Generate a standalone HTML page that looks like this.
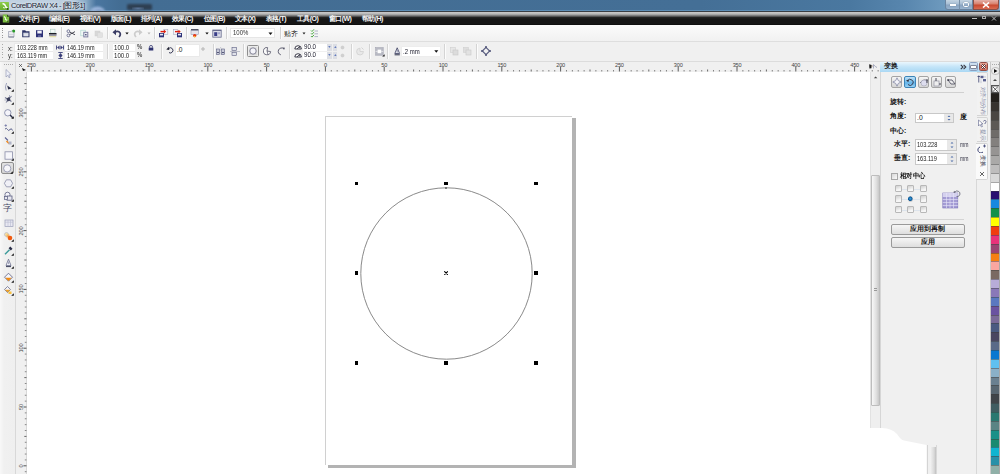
<!DOCTYPE html><html><head><meta charset="utf-8"><style>
*{margin:0;padding:0;box-sizing:border-box}
html,body{width:1000px;height:474px;overflow:hidden;background:#f0f0f0;font-family:"Liberation Sans",sans-serif;position:relative}
div,span,svg{position:absolute}
.t{white-space:nowrap;line-height:1}
</style></head><body>
<div style="left:0px;top:0px;width:1000px;height:11px;background:linear-gradient(90deg,#c2d2e2 0,#bccede 70px,#8aaac6 86px,#4a76a0 96px,#436d93 120px,#446f96 700px,#4a78a0 850px,#5886ae 905px,#6e9abe 945px,#8ab0d0 1000px)"></div>
<div style="left:0px;top:9.6px;width:1000px;height:1px;background:linear-gradient(90deg,#9ab8d4,#5d8db5 120px,#5d8db5 100%)"></div>
<svg style="left:86px;top:2px;filter:blur(0.9px);opacity:0.85" width="24" height="8.6" viewBox="0 0 24 8.6"><ellipse cx="11.5" cy="11" rx="8" ry="6.5" fill="#a8c0e6"/><ellipse cx="13" cy="11" rx="6" ry="2.5" fill="#4a5a9a"/></svg>
<div style="left:126.5px;top:3.6px;width:25px;height:6.8px;background:#2e3f52;border-radius:1.5px;filter:blur(0.9px)"></div>
<div style="left:132px;top:6.5px;width:12px;height:3.5px;background:radial-gradient(ellipse,#5a7498,rgba(42,58,76,0))"></div>
<div style="left:0px;top:1.5px;width:8.5px;height:8.2px;background:linear-gradient(#8ccc48,#6ab030);border-radius:0.5px"></div>
<svg style="left:0.5px;top:2px;" width="8" height="8" viewBox="0 0 8 8"><path d="M1.5 1.5 Q4 2 4.5 4 Q5 5.5 6.5 6" stroke="#fff" stroke-width="1.5" fill="none"/><path d="M2 5.5 Q4 6.5 5 5" stroke="#e8f8d8" stroke-width="1" fill="none"/><rect x="5.8" y="6.2" width="1.4" height="1.4" fill="#1a2a10"/></svg>
<span class="t" style="left:11px;top:2px;font-size:7.5px;color:#1a2430;letter-spacing:-0.45px;text-shadow:0 0 3px #e8f0f8,0 0 2px #e8f0f8">CorelDRAW X4 - [图形1]</span>
<div style="left:945px;top:0px;width:15px;height:10px;background:linear-gradient(#c4d4e2,#a8bed4 45%,#8aa4c0 55%,#98b4d0);border:1px solid #6a84a0;border-top:none;border-radius:0 0 0 3px"></div>
<div style="left:949.5px;top:4px;width:6px;height:2.2px;background:#fff;box-shadow:0 0 0.8px #345"></div>
<div style="left:959px;top:0px;width:14px;height:10px;background:linear-gradient(#c4d4e2,#a8bed4 45%,#8aa4c0 55%,#98b4d0);border:1px solid #6a84a0;border-top:none;border-left:1px solid #7890a8"></div>
<div style="left:963px;top:1.5px;width:6px;height:5px;border:1.5px solid #fff;border-radius:1.5px;box-shadow:0 0 0.8px #345"></div>
<div style="left:973px;top:0px;width:26px;height:10px;background:linear-gradient(#e4b0a8,#d8806c 45%,#c84830 55%,#d86a50);border:1px solid #8a5048;border-top:none;border-radius:0 0 3px 0"></div>
<svg style="left:982px;top:2px;" width="8" height="6" viewBox="0 0 8 6"><path d="M1 0.5 L7 5.5 M7 0.5 L1 5.5" stroke="#fff" stroke-width="1.6"/></svg>
<div style="left:0px;top:11px;width:1000px;height:14px;background:linear-gradient(#3a3e44 0,#3a3e44 0.6px,#c8c8c8 1.2px,#b8b8b8 3px,#6a6a6a 5px,#222 6.5px,#161616 8px,#161616 13px,#0a0a0a 14px)"></div>
<svg style="left:1.5px;top:14px;" width="8" height="9" viewBox="0 0 8 9"><path d="M0.8 0.5 H5 L7.2 2.7 V8.5 H0.8z" fill="#7cc040"/><path d="M5 0.5 V2.7 H7.2z" fill="#2a4a18"/><path d="M2 2.5 Q4 3.5 3.5 5.5 L5.5 6.5" stroke="#f0fae0" stroke-width="1.1" fill="none"/><rect x="5.3" y="6.6" width="1.2" height="1.2" fill="#1a2a10"/></svg>
<span class="t" style="left:19px;top:15px;font-size:7px;color:#f4f4f4;letter-spacing:-0.6px;font-weight:bold">文件(F)</span>
<span class="t" style="left:49px;top:15px;font-size:7px;color:#f4f4f4;letter-spacing:-0.6px;font-weight:bold">编辑(E)</span>
<span class="t" style="left:80px;top:15px;font-size:7px;color:#f4f4f4;letter-spacing:-0.6px;font-weight:bold">视图(V)</span>
<span class="t" style="left:111px;top:15px;font-size:7px;color:#f4f4f4;letter-spacing:-0.6px;font-weight:bold">版面(L)</span>
<span class="t" style="left:141px;top:15px;font-size:7px;color:#f4f4f4;letter-spacing:-0.6px;font-weight:bold">排列(A)</span>
<span class="t" style="left:172px;top:15px;font-size:7px;color:#f4f4f4;letter-spacing:-0.6px;font-weight:bold">效果(C)</span>
<span class="t" style="left:204px;top:15px;font-size:7px;color:#f4f4f4;letter-spacing:-0.6px;font-weight:bold">位图(B)</span>
<span class="t" style="left:235px;top:15px;font-size:7px;color:#f4f4f4;letter-spacing:-0.6px;font-weight:bold">文本(X)</span>
<span class="t" style="left:266px;top:15px;font-size:7px;color:#f4f4f4;letter-spacing:-0.6px;font-weight:bold">表格(T)</span>
<span class="t" style="left:297px;top:15px;font-size:7px;color:#f4f4f4;letter-spacing:-0.6px;font-weight:bold">工具(O)</span>
<span class="t" style="left:329px;top:15px;font-size:7px;color:#f4f4f4;letter-spacing:-0.6px;font-weight:bold">窗口(W)</span>
<span class="t" style="left:362px;top:15px;font-size:7px;color:#f4f4f4;letter-spacing:-0.6px;font-weight:bold">帮助(H)</span>
<div style="left:972px;top:18.3px;width:4.5px;height:1.2px;background:#bbb"></div>
<div style="left:982px;top:15.5px;width:4px;height:3.8px;border:1px solid #aaa;border-top-width:1.5px"></div>
<svg style="left:990.5px;top:15.5px;" width="6" height="5" viewBox="0 0 6 5"><path d="M1 0.5 L5 4.5 M5 0.5 L1 4.5" stroke="#bbb" stroke-width="1"/></svg>
<div style="left:0px;top:25px;width:1000px;height:16px;background:linear-gradient(#fbfbfb,#f1f1f1)"></div>
<div style="left:0px;top:40.5px;width:1000px;height:1px;background:#dedede"></div>
<div style="left:0px;top:41.5px;width:1000px;height:0.6px;background:#fdfdfd"></div>
<div style="left:2px;top:28.0px;width:1px;height:1px;background:#999"></div>
<div style="left:2px;top:30.2px;width:1px;height:1px;background:#999"></div>
<div style="left:2px;top:32.4px;width:1px;height:1px;background:#999"></div>
<div style="left:2px;top:34.6px;width:1px;height:1px;background:#999"></div>
<div style="left:2px;top:36.8px;width:1px;height:1px;background:#999"></div>
<!--icons row1-->
<svg style="left:7px;top:28px;" width="10" height="10" viewBox="0 0 10 10"><path d="M1.5 3.5 L4 3.5 L5.5 2.5 L7 3.5 L7 9 L1.5 9z" fill="#ececf0" stroke="#9a9eb0" stroke-width="0.7"/><path d="M1.5 6.5h5.5" stroke="#c8cad4" stroke-width="0.6"/><path d="M1.5 9h5.5" stroke="#6a7088" stroke-width="0.8"/><circle cx="6.7" cy="3" r="1.5" fill="#2a9a2a"/></svg>
<svg style="left:21px;top:28px;" width="10" height="10" viewBox="0 0 10 10"><path d="M1.2 2.3h3l0.8 1h3.5v5.9h-7.3z" fill="#2a3264"/><path d="M2.3 4.8h5.2v3.6h-5.2z" fill="#dfe2ea"/><path d="M2.3 4.8h5.2" stroke="#8a90b0" stroke-width="0.5"/></svg>
<svg style="left:35px;top:28px;" width="10" height="10" viewBox="0 0 10 10"><rect x="1" y="2.2" width="7" height="7" fill="#2e3278"/><rect x="2.3" y="2.7" width="4.4" height="2.8" fill="#f2f2fa"/><rect x="3" y="7" width="3" height="2" fill="#5a5e98"/></svg>
<svg style="left:48px;top:28px;" width="10" height="10" viewBox="0 0 10 10"><rect x="2.5" y="1.2" width="4.5" height="3.8" fill="#f4faf8" stroke="#b0ccc4" stroke-width="0.6"/><rect x="1" y="5" width="7.5" height="1.6" fill="#1e1e28"/><rect x="1" y="6.6" width="7.5" height="1.6" fill="#9a9aa8"/><rect x="1.5" y="8.2" width="6.5" height="1" fill="#e4dc98"/></svg>
<div style="left:61px;top:27px;width:2px;height:12px;border-left:1px solid #d4d4d4;border-right:1px solid #fcfcfc"></div>
<svg style="left:66px;top:28px;" width="10" height="10" viewBox="0 0 10 10"><circle cx="2.4" cy="3.2" r="1.4" fill="none" stroke="#6a6c90" stroke-width="0.9"/><circle cx="2.4" cy="7.4" r="1.4" fill="none" stroke="#6a6c90" stroke-width="0.9"/><path d="M3.6 4 L9 6.8 M3.6 6.6 L9 3.6" stroke="#3c3c48" stroke-width="0.9"/></svg>
<svg style="left:80px;top:28px;" width="10" height="10" viewBox="0 0 10 10"><rect x="0.8" y="2.2" width="4.6" height="5.6" fill="#f0f8f6" stroke="#a8d4cc" stroke-width="0.6"/><rect x="3.3" y="3.8" width="5" height="5.6" fill="#7a7ea0"/><rect x="4.3" y="4.8" width="3" height="3.6" fill="#f0f0f8"/><rect x="5" y="6" width="1.6" height="1.4" fill="#5a5e80"/></svg>
<svg style="left:94px;top:28px;" width="10" height="10" viewBox="0 0 10 10"><rect x="1" y="3" width="5" height="5" fill="#d8d8d8" stroke="#cfcfcf" stroke-width="0.5"/><rect x="3.5" y="4.8" width="5" height="4.6" fill="#e2e2e2" stroke="#d4d4d4" stroke-width="0.5"/></svg>
<div style="left:107px;top:27px;width:2px;height:12px;border-left:1px solid #d4d4d4;border-right:1px solid #fcfcfc"></div>
<svg style="left:112px;top:28px;" width="10" height="10" viewBox="0 0 10 10"><path d="M2.5 4.2 Q6.5 2.2 8 4.8 Q9 7 7 9" fill="none" stroke="#3a3c64" stroke-width="1.7"/><path d="M0.5 4.3 L4 1.3 L4 7.3z" fill="#3a3c64"/></svg>
<svg style="left:125px;top:32px;" width="4" height="3" viewBox="0 0 4 3"><path d="M0.3 0.5h3.4l-1.7 2z" fill="#111"/></svg>
<svg style="left:133px;top:28px;" width="10" height="10" viewBox="0 0 10 10"><path d="M7.5 4.2 Q3.5 2.2 2 4.8 Q1 7 3 9" fill="none" stroke="#cdcdcd" stroke-width="1.7"/><path d="M9.5 4.3 L6 1.3 L6 7.3z" fill="#cdcdcd"/></svg>
<svg style="left:147px;top:32px;" width="4" height="3" viewBox="0 0 4 3"><path d="M0.5 0.5h3l-1.5 2z" fill="#b8b8b8"/></svg>
<div style="left:154px;top:27px;width:2px;height:12px;border-left:1px solid #d4d4d4;border-right:1px solid #fcfcfc"></div>
<svg style="left:158px;top:28px;" width="11" height="10" viewBox="0 0 11 10"><rect x="5.8" y="1.3" width="4" height="5" fill="#f4f4f8" stroke="#a8acc0" stroke-width="0.6"/><rect x="1" y="5" width="5" height="4.3" fill="#2e3278"/><rect x="2" y="5.8" width="3" height="1.6" fill="#e8e8f4"/><path d="M2.5 3.6 H6.5" stroke="#e02010" stroke-width="1.4"/><path d="M6 1.8 L8.2 3.6 L6 5.4z" fill="#e02010"/></svg>
<svg style="left:172px;top:28px;" width="11" height="10" viewBox="0 0 11 10"><rect x="1.3" y="1.5" width="4.2" height="5" fill="#f4f4f8" stroke="#a8acc0" stroke-width="0.6"/><rect x="5" y="5" width="5" height="4.3" fill="#2e3278"/><rect x="6" y="5.8" width="3" height="1.6" fill="#e8e8f4"/><path d="M3 3.6 H7" stroke="#e02010" stroke-width="1.4"/><path d="M6.5 1.8 L8.7 3.6 L6.5 5.4z" fill="#e02010"/></svg>
<div style="left:186px;top:27px;width:2px;height:12px;border-left:1px solid #d4d4d4;border-right:1px solid #fcfcfc"></div>
<svg style="left:190px;top:28px;" width="10" height="10" viewBox="0 0 10 10"><rect x="1" y="1.2" width="7.5" height="1.4" fill="#2a2c40"/><rect x="1" y="2.6" width="7.5" height="4" fill="#e4e4ec" stroke="#8a8ea8" stroke-width="0.5"/><circle cx="4.7" cy="7.6" r="1.7" fill="#e83010"/><circle cx="4.7" cy="8.6" r="0.9" fill="#f8c030"/></svg>
<svg style="left:204.5px;top:32px;" width="4" height="3" viewBox="0 0 4 3"><path d="M0.3 0.5h3.4l-1.7 2z" fill="#111"/></svg>
<svg style="left:212px;top:28px;" width="10" height="10" viewBox="0 0 10 10"><rect x="0.8" y="2" width="8.4" height="7.2" fill="#dcdde8" stroke="#6a6e90" stroke-width="0.8"/><rect x="0.8" y="2" width="8.4" height="1" fill="#6a6e90"/><rect x="2.2" y="4.2" width="3" height="3.8" fill="#3a3e88"/><rect x="5.5" y="4.2" width="2.5" height="2" fill="#a8acd0"/></svg>
<div style="left:226px;top:27px;width:2px;height:12px;border-left:1px solid #d4d4d4;border-right:1px solid #fcfcfc"></div>
<div style="left:230px;top:28px;width:45px;height:10px;background:#fff;border:1px solid #e6e6e6"></div>
<span class="t" style="left:233px;top:29.8px;font-size:6.8px;color:#333;;transform:scaleX(0.88);transform-origin:0 0">100%</span>
<svg style="left:268px;top:32px;" width="5" height="3" viewBox="0 0 5 3"><path d="M0.5 0.5h4l-2 2.5z" fill="#111"/></svg>
<div style="left:280px;top:27px;width:2px;height:12px;border-left:1px solid #d4d4d4;border-right:1px solid #fcfcfc"></div>
<span class="t" style="left:284px;top:29.5px;font-size:7px;color:#1a1a1a;">贴齐</span>
<svg style="left:302px;top:32px;" width="4" height="3" viewBox="0 0 4 3"><path d="M0.5 0.5h3l-1.5 2z" fill="#222"/></svg>
<svg style="left:310px;top:28px;" width="9" height="10" viewBox="0 0 9 10"><path d="M1 2.5l1 1 2-2.2M1 5.3l1 1 2-2.2M1 8.1l1 1 2-2.2" fill="none" stroke="#3aa030" stroke-width="0.9"/><path d="M4.5 3h3.5M4.5 5.8h3.5M4.5 8.6h3.5" stroke="#9aa0b8" stroke-width="0.8"/></svg>
<div style="left:0px;top:42px;width:1000px;height:20px;background:#f0f0f0"></div>
<div style="left:0px;top:60.6px;width:1000px;height:0.9px;background:#dcdcdc"></div>
<div style="left:2px;top:44.0px;width:1px;height:1px;background:#aaa"></div>
<div style="left:2px;top:46.5px;width:1px;height:1px;background:#aaa"></div>
<div style="left:2px;top:49.0px;width:1px;height:1px;background:#aaa"></div>
<div style="left:2px;top:51.5px;width:1px;height:1px;background:#aaa"></div>
<div style="left:2px;top:54.0px;width:1px;height:1px;background:#aaa"></div>
<div style="left:2px;top:56.5px;width:1px;height:1px;background:#aaa"></div>
<span class="t" style="left:8px;top:44.5px;font-size:7.2px;color:#333;;transform:scaleX(0.85);transform-origin:0 0">x:</span>
<span class="t" style="left:8px;top:52px;font-size:7.2px;color:#333;;transform:scaleX(0.85);transform-origin:0 0">y:</span>
<div style="left:14.2px;top:42.8px;width:39.3px;height:17.2px;background:#e9e9e9;border-radius:1px"></div>
<div style="left:14.7px;top:43.6px;width:38.3px;height:7.6px;background:#fff"></div>
<div style="left:14.7px;top:51.8px;width:38.3px;height:7.4px;background:#fff"></div>
<span class="t" style="left:16.5px;top:44.6px;font-size:6.4px;color:#181818;;transform:scaleX(0.86);transform-origin:0 0">103.228 mm</span>
<span class="t" style="left:16.5px;top:52.7px;font-size:6.4px;color:#181818;;transform:scaleX(0.86);transform-origin:0 0">163.119 mm</span>
<svg style="left:56px;top:44.5px;" width="8" height="5" viewBox="0 0 8 5"><path d="M0.5 0.5v4M7.5 0.5v4" stroke="#3a3e78" stroke-width="0.9"/><path d="M1 2.5l2.6-2v4zM7 2.5l-2.6-2v4z" fill="#3a3e78"/></svg>
<svg style="left:58px;top:51.8px;" width="5" height="7" viewBox="0 0 5 7"><path d="M0.3 0.5h4.4M0.3 6.5h4.4" stroke="#3a3e78" stroke-width="0.9"/><path d="M2.5 1l-2 2.5h4zM2.5 6l-2-2.5h4z" fill="#3a3e78"/></svg>
<div style="left:64.7px;top:42.8px;width:38.6px;height:17.2px;background:#e9e9e9;border-radius:1px"></div>
<div style="left:65.2px;top:43.6px;width:37.6px;height:7.6px;background:#fff"></div>
<div style="left:65.2px;top:51.8px;width:37.6px;height:7.4px;background:#fff"></div>
<span class="t" style="left:66.5px;top:44.6px;font-size:6.4px;color:#181818;;transform:scaleX(0.86);transform-origin:0 0">146.19 mm</span>
<span class="t" style="left:66.5px;top:52.7px;font-size:6.4px;color:#181818;;transform:scaleX(0.86);transform-origin:0 0">146.19 mm</span>
<div style="left:107px;top:44px;width:2px;height:15px;border-left:1px solid #d4d4d4;border-right:1px solid #fcfcfc"></div>
<div style="left:112.5px;top:42.8px;width:22.5px;height:17.2px;background:#e9e9e9;border-radius:1px"></div>
<div style="left:113px;top:43.6px;width:21.5px;height:7.6px;background:#fff"></div>
<div style="left:113px;top:51.8px;width:21.5px;height:7.4px;background:#fff"></div>
<span class="t" style="left:114px;top:44.6px;font-size:6.4px;color:#181818;;transform:scaleX(0.95);transform-origin:0 0">100.0</span>
<span class="t" style="left:114px;top:52.7px;font-size:6.4px;color:#181818;;transform:scaleX(0.95);transform-origin:0 0">100.0</span>
<span class="t" style="left:137px;top:44.2px;font-size:6.6px;color:#505050;font-weight:bold;transform:scaleX(0.9);transform-origin:0 0">%</span>
<span class="t" style="left:137px;top:52.3px;font-size:6.6px;color:#505050;font-weight:bold;transform:scaleX(0.9);transform-origin:0 0">%</span>
<svg style="left:147.5px;top:44.5px;" width="6" height="6" viewBox="0 0 6 6"><path d="M1.5 2.6V1.8a1.5 1.3 0 0 1 3 0v0.8" stroke="#2e3270" fill="none" stroke-width="0.8"/><rect x="0.7" y="2.6" width="4.6" height="2.9" fill="#2e3270"/></svg>
<div style="left:161px;top:44px;width:2px;height:15px;border-left:1px solid #d4d4d4;border-right:1px solid #fcfcfc"></div>
<svg style="left:166px;top:46px;" width="9" height="8" viewBox="0 0 9 8"><path d="M2.8 2.3 A2.6 2.6 0 1 1 3 6.6" fill="none" stroke="#3a3c58" stroke-width="1"/><path d="M0.3 3.4 L2.8 0.8 L3.3 4z" fill="#1e2030"/></svg>
<div style="left:175.5px;top:45px;width:23px;height:11px;background:#fff;box-shadow:0 0 0 0.7px #e6e6e6"></div>
<span class="t" style="left:177px;top:46.5px;font-size:6.6px;color:#222;">.0</span>
<svg style="left:200.5px;top:47px;" width="4" height="4" viewBox="0 0 4 4"><circle cx="2" cy="2" r="1.2" fill="none" stroke="#999" stroke-width="0.7"/></svg>
<div style="left:213px;top:44px;width:2px;height:15px;border-left:1px solid #d4d4d4;border-right:1px solid #fcfcfc"></div>
<svg style="left:216px;top:46.5px;" width="10" height="8" viewBox="0 0 10 8"><path d="M4.6 0v8" stroke="#9a9eb0" stroke-width="0.5" stroke-dasharray="1 0.6"/><rect x="0.5" y="2" width="3" height="5.5" fill="#c8cad8" stroke="#5a5e80" stroke-width="0.6"/><rect x="5.5" y="2" width="3" height="5.5" fill="#c8cad8" stroke="#5a5e80" stroke-width="0.6"/><path d="M1.2 5.5h1.6M6.2 5.5h1.6" stroke="#3a3e60" stroke-width="1"/></svg>
<svg style="left:230px;top:46.5px;" width="10" height="9" viewBox="0 0 10 9"><path d="M0 4.5h10" stroke="#9a9eb0" stroke-width="0.6"/><rect x="2" y="0.5" width="4.5" height="3" fill="#e0e2ea" stroke="#5a5e80" stroke-width="0.6"/><rect x="2" y="5.5" width="4.5" height="3" fill="#e0e2ea" stroke="#5a5e80" stroke-width="0.6"/></svg>
<div style="left:243px;top:44px;width:2px;height:15px;border-left:1px solid #d4d4d4;border-right:1px solid #fcfcfc"></div>
<div style="left:246.8px;top:44.8px;width:12.4px;height:12.4px;background:linear-gradient(#e4e4e4,#d8d8d8);border:1.2px solid #8e8e8e;border-radius:1.5px;box-shadow:inset 0 0 0 0.6px #f4f4f4"></div>
<svg style="left:249px;top:47px;" width="8" height="8" viewBox="0 0 8 8"><circle cx="4" cy="4" r="3.2" fill="#f4f4fa" stroke="#6a6a80" stroke-width="0.8"/></svg>
<svg style="left:262.5px;top:46.5px;" width="9" height="9" viewBox="0 0 9 9"><path d="M4 4 L7.6 4.6 A3.6 3.6 0 1 1 4.6 0.6 z" fill="#fafafa" stroke="#505064" stroke-width="0.8"/><path d="M4 4 L5 7.5" stroke="#505064" stroke-width="0.7"/></svg>
<svg style="left:276.5px;top:46.5px;" width="9" height="9" viewBox="0 0 9 9"><path d="M6.8 1.6 A3.5 3.5 0 1 0 3.8 7.8" fill="none" stroke="#505064" stroke-width="0.9"/><path d="M5.6 0.6 L8 0.8 L7 3z" fill="#505064"/></svg>
<div style="left:289px;top:44px;width:2px;height:15px;border-left:1px solid #d4d4d4;border-right:1px solid #fcfcfc"></div>
<svg style="left:294.2px;top:44.2px;" width="8" height="6" viewBox="0 0 8 6"><path d="M0.8 5 A3.3 3.3 0 0 1 7.4 5z" fill="#fff" stroke="#2a2a3a" stroke-width="0.9"/><path d="M3 5 L5.6 2.4 M5.6 2.4 v1.8" stroke="#2a2a3a" stroke-width="0.8"/></svg>
<div style="left:302.5px;top:43.6px;width:24.5px;height:7.6px;background:#fff"></div>
<span class="t" style="left:304px;top:44.300000000000004px;font-size:6.9px;color:#1a1a2a;;transform:scaleX(0.9);transform-origin:0 0">90.0</span>
<div style="left:327px;top:43.6px;width:4.6px;height:7.2px;background:#dcdee4"></div>
<div style="left:332.6px;top:43.6px;width:4.6px;height:7.2px;background:#dcdee4"></div>
<svg style="left:327px;top:44.2px;" width="5" height="6" viewBox="0 0 5 6"><path d="M1.2 2.2h2.4l-1.2 1.6z" fill="#3a5ab0"/></svg>
<svg style="left:332.6px;top:44.2px;" width="5" height="6" viewBox="0 0 5 6"><path d="M1.2 3.8h2.4l-1.2-1.6z" fill="#3a5ab0"/></svg>
<svg style="left:339.5px;top:44.5px;" width="5" height="5" viewBox="0 0 5 5"><circle cx="2.5" cy="2.5" r="1.5" fill="#d0d0d0" stroke="#c0c0c0" stroke-width="0.5"/></svg>
<svg style="left:294.2px;top:52.2px;" width="8" height="6" viewBox="0 0 8 6"><path d="M0.8 5 A3.3 3.3 0 0 1 7.4 5z" fill="#fff" stroke="#2a2a3a" stroke-width="0.9"/><path d="M3 5 L5.6 2.4 M5.6 2.4 v1.8" stroke="#2a2a3a" stroke-width="0.8"/></svg>
<div style="left:302.5px;top:51.6px;width:24.5px;height:7.6px;background:#fff"></div>
<span class="t" style="left:304px;top:52.300000000000004px;font-size:6.9px;color:#1a1a2a;;transform:scaleX(0.9);transform-origin:0 0">90.0</span>
<div style="left:327px;top:51.6px;width:4.6px;height:7.2px;background:#dcdee4"></div>
<div style="left:332.6px;top:51.6px;width:4.6px;height:7.2px;background:#dcdee4"></div>
<svg style="left:327px;top:52.2px;" width="5" height="6" viewBox="0 0 5 6"><path d="M1.2 2.2h2.4l-1.2 1.6z" fill="#3a5ab0"/></svg>
<svg style="left:332.6px;top:52.2px;" width="5" height="6" viewBox="0 0 5 6"><path d="M1.2 3.8h2.4l-1.2-1.6z" fill="#3a5ab0"/></svg>
<svg style="left:339.5px;top:52.5px;" width="5" height="5" viewBox="0 0 5 5"><circle cx="2.5" cy="2.5" r="1.5" fill="#d0d0d0" stroke="#c0c0c0" stroke-width="0.5"/></svg>
<div style="left:351px;top:44px;width:2px;height:15px;border-left:1px solid #d4d4d4;border-right:1px solid #fcfcfc"></div>
<svg style="left:356px;top:47px;" width="9" height="9" viewBox="0 0 9 9"><path d="M4 4.5 L4 1.2 A3.4 3.4 0 1 0 7.4 4.5z" fill="#e8e8e8" stroke="#cdcdcd" stroke-width="0.7"/><path d="M5.5 0.5 L7.5 2.5" stroke="#c4c4c4" stroke-width="0.7"/></svg>
<div style="left:369px;top:44px;width:2px;height:15px;border-left:1px solid #d4d4d4;border-right:1px solid #fcfcfc"></div>
<svg style="left:374.5px;top:46.8px;" width="10" height="10" viewBox="0 0 10 10"><rect x="0.6" y="0.6" width="7.6" height="7.6" fill="#b8bac4" stroke="#9a9caa" stroke-width="0.5"/><rect x="2.6" y="2.6" width="3.6" height="3.6" fill="#fff"/><path d="M0.6 4.4h2M6.2 4.4h2" stroke="#fff" stroke-width="0.6"/><path d="M7.2 9.6 L9.6 9.6 L9.6 7.2z" fill="#111"/></svg>
<div style="left:387px;top:44px;width:2px;height:15px;border-left:1px solid #d4d4d4;border-right:1px solid #fcfcfc"></div>
<svg style="left:393.5px;top:46.5px;" width="7" height="9" viewBox="0 0 7 9"><path d="M3.2 0.8 L5.6 6.5 H0.8 z" fill="#eceef6" stroke="#3a3e60" stroke-width="0.8"/><path d="M3.2 3v2.5" stroke="#3a3e60" stroke-width="0.5"/><path d="M0.6 7.8h5.2" stroke="#2a2e48" stroke-width="1"/></svg>
<div style="left:401.5px;top:46.8px;width:38px;height:9.2px;background:#fff;box-shadow:0 0 0 0.6px #ececec"></div>
<span class="t" style="left:403px;top:48.5px;font-size:6.8px;color:#1a1a2a;;transform:scaleX(0.88);transform-origin:0 0">.2 mm</span>
<svg style="left:433.5px;top:50px;" width="5" height="3" viewBox="0 0 5 3"><path d="M0.3 0.3h4l-2 2.5z" fill="#111"/></svg>
<div style="left:444px;top:44px;width:2px;height:15px;border-left:1px solid #d4d4d4;border-right:1px solid #fcfcfc"></div>
<svg style="left:449.5px;top:46.5px;" width="9" height="9" viewBox="0 0 9 9"><rect x="0.5" y="0.5" width="4.8" height="4.8" fill="#e6e6e6" stroke="#cfcfcf" stroke-width="0.6"/><rect x="3" y="3" width="5" height="5" fill="#dcdcdc" stroke="#c8c8c8" stroke-width="0.6"/></svg>
<svg style="left:462.5px;top:46.5px;" width="9" height="9" viewBox="0 0 9 9"><rect x="0.5" y="0.5" width="4.8" height="4.8" fill="#dedede" stroke="#cfcfcf" stroke-width="0.6"/><rect x="3" y="3" width="5" height="5" fill="#e2e2e2" stroke="#c8c8c8" stroke-width="0.6"/></svg>
<div style="left:476px;top:44px;width:2px;height:15px;border-left:1px solid #d4d4d4;border-right:1px solid #fcfcfc"></div>
<svg style="left:480.5px;top:46px;" width="10" height="10" viewBox="0 0 10 10"><path d="M5 1.3 L8.7 5 L5 8.7 L1.3 5z" fill="none" stroke="#5a5e80" stroke-width="1.1"/><rect x="4" y="0.2" width="2" height="2" fill="#5a5e80"/><rect x="4" y="7.8" width="2" height="2" fill="#5a5e80"/><rect x="0.2" y="4" width="2" height="2" fill="#5a5e80"/><rect x="7.8" y="4" width="2" height="2" fill="#5a5e80"/></svg>
<div style="left:0px;top:62px;width:16px;height:412px;background:linear-gradient(90deg,#f8f8f8,#f0f0f0 4px,#efefef);border-right:1px solid #d8d8d8"></div>
<div style="left:3.5px;top:64px;width:1px;height:1px;background:#aaa"></div>
<div style="left:5.5px;top:64px;width:1px;height:1px;background:#aaa"></div>
<div style="left:7.5px;top:64px;width:1px;height:1px;background:#aaa"></div>
<div style="left:9.5px;top:64px;width:1px;height:1px;background:#aaa"></div>
<div style="left:11.5px;top:64px;width:1px;height:1px;background:#aaa"></div>
<svg style="left:2.5px;top:67.5px;" width="11" height="11" viewBox="0 0 11 11"><path d="M3 1.5 L3 9 L4.8 7.3 L6 9.8 L7 9.3 L5.9 6.8 L8.2 6.6 z" fill="#eef0f8" stroke="#8a90b0" stroke-width="0.6"/></svg>
<svg style="left:2.5px;top:80.5px;" width="11" height="11" viewBox="0 0 11 11"><path d="M3.2 9.5 Q1.5 6 3.6 2" fill="none" stroke="#8a90b0" stroke-width="0.8"/><path d="M4.2 4.5 L8.6 7.5 L5.2 8.6z" fill="#2a2e48"/><path d="M8.2 10.8h2.6v-2.6z" fill="#111"/></svg>
<svg style="left:2.5px;top:94.0px;" width="11" height="11" viewBox="0 0 11 11"><path d="M2 3.5 L8.5 7.5 M8.5 2 L3 8.5" stroke="#7a7e98" stroke-width="1.1"/><path d="M3.5 4.5 L6.5 2.8 L7.5 6.5 L4.5 7.5z" fill="#3a3e5a"/><path d="M1.5 6h2.5M6.5 1v2" stroke="#9a9eb8" stroke-width="0.7"/><path d="M8.2 10.8h2.6v-2.6z" fill="#111"/></svg>
<svg style="left:2.5px;top:108.0px;" width="11" height="11" viewBox="0 0 11 11"><circle cx="4.8" cy="4.8" r="3.2" fill="#f4f4fa" stroke="#7a80a0" stroke-width="0.8"/><path d="M7.1 7.1l2.6 2.6" stroke="#2a2e48" stroke-width="1.4"/><path d="M8.2 10.8h2.6v-2.6z" fill="#111"/></svg>
<svg style="left:2.5px;top:122.5px;" width="11" height="11" viewBox="0 0 11 11"><path d="M1.5 2.5h2.5M2.75 1.2v2.6" stroke="#6a70a0" stroke-width="0.7"/><path d="M2 6 Q3.5 4.5 4.5 6.5 T7 6.5 T9.5 7.5" fill="none" stroke="#4a5080" stroke-width="0.9"/><path d="M8.2 10.8h2.6v-2.6z" fill="#111"/></svg>
<svg style="left:2.5px;top:136.0px;" width="11" height="11" viewBox="0 0 11 11"><path d="M2 1.5 L5 4.5" stroke="#5a6090" stroke-width="1.1"/><path d="M3.5 5 L6 7.5" stroke="#f08a20" stroke-width="1.6"/><rect x="5.5" y="5.5" width="3" height="3" fill="#b0b4c8"/><path d="M8.2 10.8h2.6v-2.6z" fill="#111"/></svg>
<svg style="left:2.5px;top:150.2px;" width="11" height="11" viewBox="0 0 11 11"><rect x="2" y="1.8" width="7.4" height="7.4" fill="#f6f6fa" stroke="#8a8ea8" stroke-width="0.8"/><path d="M8.2 10.8h2.6v-2.6z" fill="#111"/></svg>
<div style="left:1.2px;top:162.3px;width:12.5px;height:12px;background:linear-gradient(#e2e2e2,#d4d4d4);border:1.2px solid #8e8e8e;border-radius:2px"></div>
<svg style="left:2px;top:162.8px;" width="11" height="11" viewBox="0 0 11 11"><circle cx="5.2" cy="5.4" r="3.6" fill="#f6f6fa" stroke="#8a8ea8" stroke-width="0.8"/><path d="M8.2 10.8h2.6v-2.6z" fill="#111"/></svg>
<svg style="left:2.5px;top:177.5px;" width="11" height="11" viewBox="0 0 11 11"><path d="M3.4 1.8 H7.6 L9.6 5.3 L7.6 8.8 H3.4 L1.4 5.3z" fill="#f0f0f6" stroke="#8a8ea8" stroke-width="0.8"/><path d="M8.2 10.8h2.6v-2.6z" fill="#111"/></svg>
<svg style="left:2.5px;top:190.5px;" width="11" height="11" viewBox="0 0 11 11"><circle cx="4.5" cy="3.8" r="2.6" fill="#f4f4fa" stroke="#5a5e80" stroke-width="0.8"/><rect x="4" y="5" width="5" height="4.2" fill="#e8e8f0" stroke="#5a5e80" stroke-width="0.8"/><rect x="1.5" y="5.5" width="3" height="3" fill="#e8e8f0" stroke="#5a5e80" stroke-width="0.7"/><path d="M8.2 10.8h2.6v-2.6z" fill="#111"/></svg>
<span class="t" style="left:3.2px;top:204.3px;font-size:8.6px;color:#4a4e68;">字</span>
<svg style="left:2.5px;top:217.5px;" width="11" height="11" viewBox="0 0 11 11"><rect x="2" y="2" width="8" height="6.5" fill="#e8e8f2" stroke="#9a9eb8" stroke-width="0.7"/><path d="M2 4.2h8M5 2v6.5M7.5 2v6.5" stroke="#b8bcd0" stroke-width="0.6"/></svg>
<svg style="left:2.5px;top:231.1px;" width="11" height="11" viewBox="0 0 11 11"><circle cx="3.5" cy="3.5" r="2" fill="#f8e0a0" stroke="#a0a4c0" stroke-width="0.5"/><rect x="3.5" y="3.5" width="3" height="3" fill="#f4b060"/><circle cx="7" cy="7" r="2.3" fill="#f05a10"/><path d="M8.2 10.8h2.6v-2.6z" fill="#111"/></svg>
<svg style="left:2.5px;top:244.5px;" width="11" height="11" viewBox="0 0 11 11"><path d="M2 9.2 L6.5 4.7" stroke="#3a9a9a" stroke-width="1.5"/><path d="M5.6 3.2 L7.8 5.4 L9.5 3.7 L7.3 1.5z" fill="#2a2e48"/><path d="M8.2 10.8h2.6v-2.6z" fill="#111"/></svg>
<svg style="left:2.5px;top:258.1px;" width="11" height="11" viewBox="0 0 11 11"><path d="M5.5 1.2 L8 7.5 H3 z" fill="#eef0f8" stroke="#5a5e80" stroke-width="0.7"/><path d="M5.5 3.6v2.5" stroke="#5a5e80" stroke-width="0.5"/><path d="M3 8.6h5" stroke="#3a3e58" stroke-width="1"/><path d="M8.2 10.8h2.6v-2.6z" fill="#111"/></svg>
<svg style="left:2.5px;top:271.5px;" width="11" height="11" viewBox="0 0 11 11"><path d="M5.5 1.2 L9.5 5.2 L5.5 9.2 L1.5 5.2z" fill="#f4f4fa" stroke="#5a5e80" stroke-width="0.8"/><path d="M2.3 5.8 L8.7 5.8 L5.5 9z" fill="#f08a10"/><path d="M8.2 10.8h2.6v-2.6z" fill="#111"/></svg>
<svg style="left:2.5px;top:285.0px;" width="11" height="11" viewBox="0 0 11 11"><path d="M4.5 1.5 L7.5 4.5 L4.5 7.5 L1.5 4.5z" fill="#f4f4fa" stroke="#5a5e80" stroke-width="0.7"/><path d="M2 4.8 L7 4.8 L4.5 7.2z" fill="#f0a020"/><rect x="5.5" y="6.5" width="3" height="2.5" fill="#f8c040"/><path d="M8.2 10.8h2.6v-2.6z" fill="#111"/></svg>
<div style="left:16px;top:62px;width:864px;height:10.5px;background:#f0f0f0;border-bottom:1px solid #e2e2e2"></div>
<div style="left:16px;top:72px;width:11px;height:402px;background:#f0f0f0;border-right:1px solid #d8d8d8"></div>
<svg style="left:18px;top:63px;" width="9" height="8" viewBox="0 0 9 8"><path d="M1 1 L4 4 M1 4 L4 1" stroke="#444" stroke-width="0.7"/><path d="M4 5 L8 7 L5 8z" fill="#111"/></svg>
<span class="t" style="left:25.40px;top:62.6px;width:12px;text-align:center;font-size:5.6px;color:#444;letter-spacing:-0.2px">250</span>
<span class="t" style="left:84.20px;top:62.6px;width:12px;text-align:center;font-size:5.6px;color:#444;letter-spacing:-0.2px">200</span>
<span class="t" style="left:143.00px;top:62.6px;width:12px;text-align:center;font-size:5.6px;color:#444;letter-spacing:-0.2px">150</span>
<span class="t" style="left:201.80px;top:62.6px;width:12px;text-align:center;font-size:5.6px;color:#444;letter-spacing:-0.2px">100</span>
<span class="t" style="left:260.60px;top:62.6px;width:12px;text-align:center;font-size:5.6px;color:#444;letter-spacing:-0.2px">50</span>
<span class="t" style="left:319.40px;top:62.6px;width:12px;text-align:center;font-size:5.6px;color:#444;letter-spacing:-0.2px">0</span>
<span class="t" style="left:378.20px;top:62.6px;width:12px;text-align:center;font-size:5.6px;color:#444;letter-spacing:-0.2px">50</span>
<span class="t" style="left:437.00px;top:62.6px;width:12px;text-align:center;font-size:5.6px;color:#444;letter-spacing:-0.2px">100</span>
<span class="t" style="left:495.80px;top:62.6px;width:12px;text-align:center;font-size:5.6px;color:#444;letter-spacing:-0.2px">150</span>
<span class="t" style="left:554.60px;top:62.6px;width:12px;text-align:center;font-size:5.6px;color:#444;letter-spacing:-0.2px">200</span>
<span class="t" style="left:613.40px;top:62.6px;width:12px;text-align:center;font-size:5.6px;color:#444;letter-spacing:-0.2px">250</span>
<span class="t" style="left:672.20px;top:62.6px;width:12px;text-align:center;font-size:5.6px;color:#444;letter-spacing:-0.2px">300</span>
<span class="t" style="left:731.00px;top:62.6px;width:12px;text-align:center;font-size:5.6px;color:#444;letter-spacing:-0.2px">350</span>
<span class="t" style="left:789.80px;top:62.6px;width:12px;text-align:center;font-size:5.6px;color:#444;letter-spacing:-0.2px">400</span>
<span class="t" style="left:848.60px;top:62.6px;width:12px;text-align:center;font-size:5.6px;color:#444;letter-spacing:-0.2px">450</span>
<svg style="left:0;top:62px" width="880" height="10"><rect x="30.90" y="5" width="1" height="4.5" fill="#5a5a5a"/><rect x="36.78" y="8" width="1" height="1.5" fill="#808080"/><rect x="42.66" y="8" width="1" height="1.5" fill="#808080"/><rect x="48.54" y="8" width="1" height="1.5" fill="#808080"/><rect x="54.42" y="8" width="1" height="1.5" fill="#808080"/><rect x="60.30" y="7.5" width="1" height="2" fill="#666"/><rect x="66.18" y="8" width="1" height="1.5" fill="#808080"/><rect x="72.06" y="8" width="1" height="1.5" fill="#808080"/><rect x="77.94" y="8" width="1" height="1.5" fill="#808080"/><rect x="83.82" y="8" width="1" height="1.5" fill="#808080"/><rect x="89.70" y="5" width="1" height="4.5" fill="#5a5a5a"/><rect x="95.58" y="8" width="1" height="1.5" fill="#808080"/><rect x="101.46" y="8" width="1" height="1.5" fill="#808080"/><rect x="107.34" y="8" width="1" height="1.5" fill="#808080"/><rect x="113.22" y="8" width="1" height="1.5" fill="#808080"/><rect x="119.10" y="7.5" width="1" height="2" fill="#666"/><rect x="124.98" y="8" width="1" height="1.5" fill="#808080"/><rect x="130.86" y="8" width="1" height="1.5" fill="#808080"/><rect x="136.74" y="8" width="1" height="1.5" fill="#808080"/><rect x="142.62" y="8" width="1" height="1.5" fill="#808080"/><rect x="148.50" y="5" width="1" height="4.5" fill="#5a5a5a"/><rect x="154.38" y="8" width="1" height="1.5" fill="#808080"/><rect x="160.26" y="8" width="1" height="1.5" fill="#808080"/><rect x="166.14" y="8" width="1" height="1.5" fill="#808080"/><rect x="172.02" y="8" width="1" height="1.5" fill="#808080"/><rect x="177.90" y="7.5" width="1" height="2" fill="#666"/><rect x="183.78" y="8" width="1" height="1.5" fill="#808080"/><rect x="189.66" y="8" width="1" height="1.5" fill="#808080"/><rect x="195.54" y="8" width="1" height="1.5" fill="#808080"/><rect x="201.42" y="8" width="1" height="1.5" fill="#808080"/><rect x="207.30" y="5" width="1" height="4.5" fill="#5a5a5a"/><rect x="213.18" y="8" width="1" height="1.5" fill="#808080"/><rect x="219.06" y="8" width="1" height="1.5" fill="#808080"/><rect x="224.94" y="8" width="1" height="1.5" fill="#808080"/><rect x="230.82" y="8" width="1" height="1.5" fill="#808080"/><rect x="236.70" y="7.5" width="1" height="2" fill="#666"/><rect x="242.58" y="8" width="1" height="1.5" fill="#808080"/><rect x="248.46" y="8" width="1" height="1.5" fill="#808080"/><rect x="254.34" y="8" width="1" height="1.5" fill="#808080"/><rect x="260.22" y="8" width="1" height="1.5" fill="#808080"/><rect x="266.10" y="5" width="1" height="4.5" fill="#5a5a5a"/><rect x="271.98" y="8" width="1" height="1.5" fill="#808080"/><rect x="277.86" y="8" width="1" height="1.5" fill="#808080"/><rect x="283.74" y="8" width="1" height="1.5" fill="#808080"/><rect x="289.62" y="8" width="1" height="1.5" fill="#808080"/><rect x="295.50" y="7.5" width="1" height="2" fill="#666"/><rect x="301.38" y="8" width="1" height="1.5" fill="#808080"/><rect x="307.26" y="8" width="1" height="1.5" fill="#808080"/><rect x="313.14" y="8" width="1" height="1.5" fill="#808080"/><rect x="319.02" y="8" width="1" height="1.5" fill="#808080"/><rect x="324.90" y="5" width="1" height="4.5" fill="#5a5a5a"/><rect x="330.78" y="8" width="1" height="1.5" fill="#808080"/><rect x="336.66" y="8" width="1" height="1.5" fill="#808080"/><rect x="342.54" y="8" width="1" height="1.5" fill="#808080"/><rect x="348.42" y="8" width="1" height="1.5" fill="#808080"/><rect x="354.30" y="7.5" width="1" height="2" fill="#666"/><rect x="360.18" y="8" width="1" height="1.5" fill="#808080"/><rect x="366.06" y="8" width="1" height="1.5" fill="#808080"/><rect x="371.94" y="8" width="1" height="1.5" fill="#808080"/><rect x="377.82" y="8" width="1" height="1.5" fill="#808080"/><rect x="383.70" y="5" width="1" height="4.5" fill="#5a5a5a"/><rect x="389.58" y="8" width="1" height="1.5" fill="#808080"/><rect x="395.46" y="8" width="1" height="1.5" fill="#808080"/><rect x="401.34" y="8" width="1" height="1.5" fill="#808080"/><rect x="407.22" y="8" width="1" height="1.5" fill="#808080"/><rect x="413.10" y="7.5" width="1" height="2" fill="#666"/><rect x="418.98" y="8" width="1" height="1.5" fill="#808080"/><rect x="424.86" y="8" width="1" height="1.5" fill="#808080"/><rect x="430.74" y="8" width="1" height="1.5" fill="#808080"/><rect x="436.62" y="8" width="1" height="1.5" fill="#808080"/><rect x="442.50" y="5" width="1" height="4.5" fill="#5a5a5a"/><rect x="448.38" y="8" width="1" height="1.5" fill="#808080"/><rect x="454.26" y="8" width="1" height="1.5" fill="#808080"/><rect x="460.14" y="8" width="1" height="1.5" fill="#808080"/><rect x="466.02" y="8" width="1" height="1.5" fill="#808080"/><rect x="471.90" y="7.5" width="1" height="2" fill="#666"/><rect x="477.78" y="8" width="1" height="1.5" fill="#808080"/><rect x="483.66" y="8" width="1" height="1.5" fill="#808080"/><rect x="489.54" y="8" width="1" height="1.5" fill="#808080"/><rect x="495.42" y="8" width="1" height="1.5" fill="#808080"/><rect x="501.30" y="5" width="1" height="4.5" fill="#5a5a5a"/><rect x="507.18" y="8" width="1" height="1.5" fill="#808080"/><rect x="513.06" y="8" width="1" height="1.5" fill="#808080"/><rect x="518.94" y="8" width="1" height="1.5" fill="#808080"/><rect x="524.82" y="8" width="1" height="1.5" fill="#808080"/><rect x="530.70" y="7.5" width="1" height="2" fill="#666"/><rect x="536.58" y="8" width="1" height="1.5" fill="#808080"/><rect x="542.46" y="8" width="1" height="1.5" fill="#808080"/><rect x="548.34" y="8" width="1" height="1.5" fill="#808080"/><rect x="554.22" y="8" width="1" height="1.5" fill="#808080"/><rect x="560.10" y="5" width="1" height="4.5" fill="#5a5a5a"/><rect x="565.98" y="8" width="1" height="1.5" fill="#808080"/><rect x="571.86" y="8" width="1" height="1.5" fill="#808080"/><rect x="577.74" y="8" width="1" height="1.5" fill="#808080"/><rect x="583.62" y="8" width="1" height="1.5" fill="#808080"/><rect x="589.50" y="7.5" width="1" height="2" fill="#666"/><rect x="595.38" y="8" width="1" height="1.5" fill="#808080"/><rect x="601.26" y="8" width="1" height="1.5" fill="#808080"/><rect x="607.14" y="8" width="1" height="1.5" fill="#808080"/><rect x="613.02" y="8" width="1" height="1.5" fill="#808080"/><rect x="618.90" y="5" width="1" height="4.5" fill="#5a5a5a"/><rect x="624.78" y="8" width="1" height="1.5" fill="#808080"/><rect x="630.66" y="8" width="1" height="1.5" fill="#808080"/><rect x="636.54" y="8" width="1" height="1.5" fill="#808080"/><rect x="642.42" y="8" width="1" height="1.5" fill="#808080"/><rect x="648.30" y="7.5" width="1" height="2" fill="#666"/><rect x="654.18" y="8" width="1" height="1.5" fill="#808080"/><rect x="660.06" y="8" width="1" height="1.5" fill="#808080"/><rect x="665.94" y="8" width="1" height="1.5" fill="#808080"/><rect x="671.82" y="8" width="1" height="1.5" fill="#808080"/><rect x="677.70" y="5" width="1" height="4.5" fill="#5a5a5a"/><rect x="683.58" y="8" width="1" height="1.5" fill="#808080"/><rect x="689.46" y="8" width="1" height="1.5" fill="#808080"/><rect x="695.34" y="8" width="1" height="1.5" fill="#808080"/><rect x="701.22" y="8" width="1" height="1.5" fill="#808080"/><rect x="707.10" y="7.5" width="1" height="2" fill="#666"/><rect x="712.98" y="8" width="1" height="1.5" fill="#808080"/><rect x="718.86" y="8" width="1" height="1.5" fill="#808080"/><rect x="724.74" y="8" width="1" height="1.5" fill="#808080"/><rect x="730.62" y="8" width="1" height="1.5" fill="#808080"/><rect x="736.50" y="5" width="1" height="4.5" fill="#5a5a5a"/><rect x="742.38" y="8" width="1" height="1.5" fill="#808080"/><rect x="748.26" y="8" width="1" height="1.5" fill="#808080"/><rect x="754.14" y="8" width="1" height="1.5" fill="#808080"/><rect x="760.02" y="8" width="1" height="1.5" fill="#808080"/><rect x="765.90" y="7.5" width="1" height="2" fill="#666"/><rect x="771.78" y="8" width="1" height="1.5" fill="#808080"/><rect x="777.66" y="8" width="1" height="1.5" fill="#808080"/><rect x="783.54" y="8" width="1" height="1.5" fill="#808080"/><rect x="789.42" y="8" width="1" height="1.5" fill="#808080"/><rect x="795.30" y="5" width="1" height="4.5" fill="#5a5a5a"/><rect x="801.18" y="8" width="1" height="1.5" fill="#808080"/><rect x="807.06" y="8" width="1" height="1.5" fill="#808080"/><rect x="812.94" y="8" width="1" height="1.5" fill="#808080"/><rect x="818.82" y="8" width="1" height="1.5" fill="#808080"/><rect x="824.70" y="7.5" width="1" height="2" fill="#666"/><rect x="830.58" y="8" width="1" height="1.5" fill="#808080"/><rect x="836.46" y="8" width="1" height="1.5" fill="#808080"/><rect x="842.34" y="8" width="1" height="1.5" fill="#808080"/><rect x="848.22" y="8" width="1" height="1.5" fill="#808080"/><rect x="854.10" y="5" width="1" height="4.5" fill="#5a5a5a"/><rect x="859.98" y="8" width="1" height="1.5" fill="#808080"/><rect x="865.86" y="8" width="1" height="1.5" fill="#808080"/><rect x="871.74" y="8" width="1" height="1.5" fill="#808080"/><rect x="877.62" y="8" width="1" height="1.5" fill="#808080"/></svg>
<span class="t" style="left:15.5px;top:462.80px;width:12px;text-align:center;font-size:5.6px;color:#444;letter-spacing:-0.2px;transform:rotate(-90deg);transform-origin:6px 3px">0</span>
<span class="t" style="left:15.5px;top:404.00px;width:12px;text-align:center;font-size:5.6px;color:#444;letter-spacing:-0.2px;transform:rotate(-90deg);transform-origin:6px 3px">50</span>
<span class="t" style="left:15.5px;top:345.20px;width:12px;text-align:center;font-size:5.6px;color:#444;letter-spacing:-0.2px;transform:rotate(-90deg);transform-origin:6px 3px">100</span>
<span class="t" style="left:15.5px;top:286.40px;width:12px;text-align:center;font-size:5.6px;color:#444;letter-spacing:-0.2px;transform:rotate(-90deg);transform-origin:6px 3px">150</span>
<span class="t" style="left:15.5px;top:227.60px;width:12px;text-align:center;font-size:5.6px;color:#444;letter-spacing:-0.2px;transform:rotate(-90deg);transform-origin:6px 3px">200</span>
<span class="t" style="left:15.5px;top:168.80px;width:12px;text-align:center;font-size:5.6px;color:#444;letter-spacing:-0.2px;transform:rotate(-90deg);transform-origin:6px 3px">250</span>
<span class="t" style="left:15.5px;top:110.00px;width:12px;text-align:center;font-size:5.6px;color:#444;letter-spacing:-0.2px;transform:rotate(-90deg);transform-origin:6px 3px">300</span>
<svg style="left:17px;top:0" width="10" height="474"><rect x="7.8" y="471.18" width="1.7" height="1" fill="#888"/><rect x="6.5" y="465.30" width="3" height="1" fill="#555"/><rect x="7.8" y="459.42" width="1.7" height="1" fill="#888"/><rect x="7.8" y="453.54" width="1.7" height="1" fill="#888"/><rect x="7.8" y="447.66" width="1.7" height="1" fill="#888"/><rect x="7.8" y="441.78" width="1.7" height="1" fill="#888"/><rect x="7.3" y="435.90" width="2.2" height="1" fill="#666"/><rect x="7.8" y="430.02" width="1.7" height="1" fill="#888"/><rect x="7.8" y="424.14" width="1.7" height="1" fill="#888"/><rect x="7.8" y="418.26" width="1.7" height="1" fill="#888"/><rect x="7.8" y="412.38" width="1.7" height="1" fill="#888"/><rect x="6.5" y="406.50" width="3" height="1" fill="#555"/><rect x="7.8" y="400.62" width="1.7" height="1" fill="#888"/><rect x="7.8" y="394.74" width="1.7" height="1" fill="#888"/><rect x="7.8" y="388.86" width="1.7" height="1" fill="#888"/><rect x="7.8" y="382.98" width="1.7" height="1" fill="#888"/><rect x="7.3" y="377.10" width="2.2" height="1" fill="#666"/><rect x="7.8" y="371.22" width="1.7" height="1" fill="#888"/><rect x="7.8" y="365.34" width="1.7" height="1" fill="#888"/><rect x="7.8" y="359.46" width="1.7" height="1" fill="#888"/><rect x="7.8" y="353.58" width="1.7" height="1" fill="#888"/><rect x="6.5" y="347.70" width="3" height="1" fill="#555"/><rect x="7.8" y="341.82" width="1.7" height="1" fill="#888"/><rect x="7.8" y="335.94" width="1.7" height="1" fill="#888"/><rect x="7.8" y="330.06" width="1.7" height="1" fill="#888"/><rect x="7.8" y="324.18" width="1.7" height="1" fill="#888"/><rect x="7.3" y="318.30" width="2.2" height="1" fill="#666"/><rect x="7.8" y="312.42" width="1.7" height="1" fill="#888"/><rect x="7.8" y="306.54" width="1.7" height="1" fill="#888"/><rect x="7.8" y="300.66" width="1.7" height="1" fill="#888"/><rect x="7.8" y="294.78" width="1.7" height="1" fill="#888"/><rect x="6.5" y="288.90" width="3" height="1" fill="#555"/><rect x="7.8" y="283.02" width="1.7" height="1" fill="#888"/><rect x="7.8" y="277.14" width="1.7" height="1" fill="#888"/><rect x="7.8" y="271.26" width="1.7" height="1" fill="#888"/><rect x="7.8" y="265.38" width="1.7" height="1" fill="#888"/><rect x="7.3" y="259.50" width="2.2" height="1" fill="#666"/><rect x="7.8" y="253.62" width="1.7" height="1" fill="#888"/><rect x="7.8" y="247.74" width="1.7" height="1" fill="#888"/><rect x="7.8" y="241.86" width="1.7" height="1" fill="#888"/><rect x="7.8" y="235.98" width="1.7" height="1" fill="#888"/><rect x="6.5" y="230.10" width="3" height="1" fill="#555"/><rect x="7.8" y="224.22" width="1.7" height="1" fill="#888"/><rect x="7.8" y="218.34" width="1.7" height="1" fill="#888"/><rect x="7.8" y="212.46" width="1.7" height="1" fill="#888"/><rect x="7.8" y="206.58" width="1.7" height="1" fill="#888"/><rect x="7.3" y="200.70" width="2.2" height="1" fill="#666"/><rect x="7.8" y="194.82" width="1.7" height="1" fill="#888"/><rect x="7.8" y="188.94" width="1.7" height="1" fill="#888"/><rect x="7.8" y="183.06" width="1.7" height="1" fill="#888"/><rect x="7.8" y="177.18" width="1.7" height="1" fill="#888"/><rect x="6.5" y="171.30" width="3" height="1" fill="#555"/><rect x="7.8" y="165.42" width="1.7" height="1" fill="#888"/><rect x="7.8" y="159.54" width="1.7" height="1" fill="#888"/><rect x="7.8" y="153.66" width="1.7" height="1" fill="#888"/><rect x="7.8" y="147.78" width="1.7" height="1" fill="#888"/><rect x="7.3" y="141.90" width="2.2" height="1" fill="#666"/><rect x="7.8" y="136.02" width="1.7" height="1" fill="#888"/><rect x="7.8" y="130.14" width="1.7" height="1" fill="#888"/><rect x="7.8" y="124.26" width="1.7" height="1" fill="#888"/><rect x="7.8" y="118.38" width="1.7" height="1" fill="#888"/><rect x="6.5" y="112.50" width="3" height="1" fill="#555"/><rect x="7.8" y="106.62" width="1.7" height="1" fill="#888"/><rect x="7.8" y="100.74" width="1.7" height="1" fill="#888"/><rect x="7.8" y="94.86" width="1.7" height="1" fill="#888"/><rect x="7.8" y="88.98" width="1.7" height="1" fill="#888"/><rect x="7.3" y="83.10" width="2.2" height="1" fill="#666"/><rect x="7.8" y="77.22" width="1.7" height="1" fill="#888"/></svg>
<svg style="left:868px;top:63px;" width="10" height="7" viewBox="0 0 10 7"><path d="M1.2 1.2 L3.6 2 L3.4 5.2 L1.4 5.6z" fill="#1a1a1a"/><path d="M3.5 3h1.2" stroke="#8a6a50" stroke-width="0.8"/><path d="M5.5 5.5V1.5L8 4.2H9" fill="none" stroke="#9aa0b8" stroke-width="0.8"/></svg>
<div style="left:27px;top:72px;width:843px;height:402px;background:#fff"></div>
<div style="left:328px;top:118px;width:248px;height:350px;background:#b3b3b3"></div>
<div style="left:325px;top:116px;width:247px;height:349px;background:#fff;border:1px solid #d0d0d0;border-right:none;border-bottom:none"></div>
<svg style="left:355px;top:181px;" width="186" height="187" viewBox="0 0 186 187"><circle cx="91.5" cy="92.5" r="85.7" fill="none" stroke="#8a8a8a" stroke-width="1"/></svg>
<div style="left:354.75px;top:181.85px;width:3.5px;height:3.5px;background:#000"></div>
<div style="left:354.75px;top:271.45px;width:3.5px;height:3.5px;background:#000"></div>
<div style="left:354.75px;top:361.15px;width:3.5px;height:3.5px;background:#000"></div>
<div style="left:444.25px;top:181.85px;width:3.5px;height:3.5px;background:#000"></div>
<div style="left:444.25px;top:361.15px;width:3.5px;height:3.5px;background:#000"></div>
<div style="left:534.05px;top:181.85px;width:3.5px;height:3.5px;background:#000"></div>
<div style="left:534.05px;top:271.45px;width:3.5px;height:3.5px;background:#000"></div>
<div style="left:534.05px;top:361.15px;width:3.5px;height:3.5px;background:#000"></div>
<svg style="left:444px;top:271px;" width="4.2" height="4.2" viewBox="0 0 4.2 4.2"><path d="M0.3 0.3L3.9 3.9M3.9 0.3L0.3 3.9" stroke="#000" stroke-width="1.1"/></svg>
<div style="left:445.4px;top:186.6px;width:2px;height:2px;background:#777"></div>
<div style="left:870px;top:72px;width:10.5px;height:402px;background:#efefef;border-left:1px solid #e2e2e2;border-right:1px solid #dcdcdc"></div>
<svg style="left:872px;top:74px;" width="7" height="6" viewBox="0 0 7 6"><path d="M1.8 4.2L3.6 2.4L5.4 4.2z" fill="#444"/></svg>
<div style="left:871px;top:175px;width:8.5px;height:230.5px;background:linear-gradient(90deg,#f8f8f8,#e0e0e0 60%,#c8c8c8);border:1px solid #bdbdbd;border-radius:1px"></div>
<div style="left:874px;top:288px;width:3px;height:3px;border-top:1px solid #999;border-bottom:1px solid #999"></div>
<div style="left:880px;top:62px;width:96px;height:412px;background:#f0f0f0;border-left:1px solid #d6d6d6"></div>
<div style="left:890.5px;top:76px;width:11.4px;height:11.6px;background:linear-gradient(#f6f6f6,#e2e2e2 50%,#d6d6d6);border:1px solid #a4a4a4;border-radius:2px"></div>
<div style="left:904px;top:76px;width:11.8px;height:11.6px;background:linear-gradient(#c0e2f8,#74bdec 50%,#62b2e8 60%,#9ad2f4);border:1px solid #3c84b8;border-radius:2px"></div>
<div style="left:917.5px;top:76px;width:11.4px;height:11.6px;background:linear-gradient(#f6f6f6,#e2e2e2 50%,#d6d6d6);border:1px solid #a4a4a4;border-radius:2px"></div>
<div style="left:931px;top:76px;width:11.4px;height:11.6px;background:linear-gradient(#f6f6f6,#e2e2e2 50%,#d6d6d6);border:1px solid #a4a4a4;border-radius:2px"></div>
<div style="left:944.5px;top:76px;width:11.4px;height:11.6px;background:linear-gradient(#f6f6f6,#e2e2e2 50%,#d6d6d6);border:1px solid #a4a4a4;border-radius:2px"></div>
<svg style="left:891.5px;top:77px;" width="10" height="10" viewBox="0 0 10 10"><path d="M5 0.8 Q5.6 4.4 9.2 5 Q5.6 5.6 5 9.2 Q4.4 5.6 0.8 5 Q4.4 4.4 5 0.8z" fill="#f4f4fa" stroke="#7a80a0" stroke-width="0.7"/></svg>
<svg style="left:905px;top:77px;" width="10" height="10" viewBox="0 0 10 10"><path d="M2.5 4 A3 3 0 1 1 3 7.5" fill="none" stroke="#334" stroke-width="0.9"/><path d="M1 3.5l2.5 1.5 0.3-2.5z" fill="#334"/></svg>
<svg style="left:918.5px;top:77px;" width="10" height="10" viewBox="0 0 10 10"><path d="M1 6 Q5 1 9 4" fill="none" stroke="#667" stroke-width="0.8"/><circle cx="5" cy="6" r="3" fill="#dde" stroke="#99a" stroke-width="0.5"/><path d="M8 2v4" stroke="#223" stroke-width="0.8"/></svg>
<svg style="left:932px;top:77px;" width="10" height="10" viewBox="0 0 10 10"><rect x="2" y="4" width="5" height="5" fill="#eee" stroke="#889" stroke-width="0.6"/><path d="M4 1v3M7 7h2" stroke="#223" stroke-width="0.8"/></svg>
<svg style="left:945.5px;top:77px;" width="10" height="10" viewBox="0 0 10 10"><path d="M2 3 L6 3 L9 7 L5 7z" fill="#eee" stroke="#445" stroke-width="0.8"/><path d="M2 2v2" stroke="#223"/></svg>
<div style="left:890px;top:91.5px;width:74px;height:1px;background:#d0d0d0"></div>
<span class="t" style="left:890px;top:99px;font-size:6.8px;color:#111;font-weight:bold">旋转:</span>
<span class="t" style="left:890px;top:113.3px;font-size:6.8px;color:#111;font-weight:bold">角度:</span>
<div style="left:915px;top:112.5px;width:30px;height:10px;background:#fff;border:1px solid #c8c8c8"></div>
<span class="t" style="left:917px;top:114.5px;font-size:6.8px;color:#222;">.0</span>
<div style="left:944px;top:112.5px;width:9.5px;height:10px;background:#e8e8e8;border:1px solid #c8c8c8;border-left:none"></div>
<svg style="left:945px;top:113.5px;" width="8" height="8" viewBox="0 0 8 8"><path d="M2.5 3l1.5-1.5 1.5 1.5zM2.5 5l1.5 1.5 1.5-1.5z" fill="#4a6aa8"/></svg>
<span class="t" style="left:960px;top:114px;font-size:6.8px;color:#111;font-weight:bold">度</span>
<span class="t" style="left:890px;top:127.5px;font-size:6.8px;color:#111;font-weight:bold">中心:</span>
<span class="t" style="left:894px;top:140.8px;font-size:6.8px;color:#111;font-weight:bold">水平:</span>
<div style="left:915px;top:139px;width:33px;height:12px;background:#fff;border:1px solid #c8c8c8"></div>
<span class="t" style="left:917px;top:141px;font-size:7.2px;color:#1a1a1a;;transform:scaleX(0.78);transform-origin:0 0">103.228</span>
<div style="left:947px;top:139px;width:9.5px;height:12px;background:#e8e8e8;border:1px solid #c8c8c8;border-left:none"></div>
<svg style="left:948px;top:140px;" width="8" height="10" viewBox="0 0 8 10"><path d="M2.5 3.5l1.5-1.5 1.5 1.5zM2.5 6.5l1.5 1.5 1.5-1.5z" fill="#4a6aa8"/></svg>
<span class="t" style="left:960px;top:141.3px;font-size:7px;color:#334;;transform:scaleX(0.72);transform-origin:0 0">mm</span>
<span class="t" style="left:894px;top:154.8px;font-size:6.8px;color:#111;font-weight:bold">垂直:</span>
<div style="left:915px;top:153px;width:33px;height:12px;background:#fff;border:1px solid #c8c8c8"></div>
<span class="t" style="left:917px;top:155px;font-size:7.2px;color:#1a1a1a;;transform:scaleX(0.78);transform-origin:0 0">163.119</span>
<div style="left:947px;top:153px;width:9.5px;height:12px;background:#e8e8e8;border:1px solid #c8c8c8;border-left:none"></div>
<svg style="left:948px;top:154px;" width="8" height="10" viewBox="0 0 8 10"><path d="M2.5 3.5l1.5-1.5 1.5 1.5zM2.5 6.5l1.5 1.5 1.5-1.5z" fill="#4a6aa8"/></svg>
<span class="t" style="left:960px;top:155.3px;font-size:7px;color:#334;;transform:scaleX(0.72);transform-origin:0 0">mm</span>
<div style="left:891px;top:172.8px;width:7px;height:7px;background:linear-gradient(135deg,#d8d8d8,#fafafa);border:1px solid #a8a8a8"></div>
<span class="t" style="left:899.5px;top:173px;font-size:6.8px;color:#111;font-weight:bold;transform:scaleX(0.9);transform-origin:0 0">相对中心</span>
<div style="left:898px;top:188.5px;width:25px;height:0.6px;background:#dde4ec"></div>
<div style="left:898px;top:199px;width:25px;height:0.6px;background:#dde4ec"></div>
<div style="left:898px;top:209.5px;width:25px;height:0.6px;background:#dde4ec"></div>
<div style="left:894.8px;top:185px;width:7.2px;height:7.4px;background:linear-gradient(160deg,#cfcfcf,#f6f6f6 70%);border:1px solid #b8b8b8;border-radius:1px"></div>
<div style="left:907px;top:185px;width:7.2px;height:7.4px;background:linear-gradient(160deg,#cfcfcf,#f6f6f6 70%);border:1px solid #b8b8b8;border-radius:1px"></div>
<div style="left:919.5px;top:185px;width:7.2px;height:7.4px;background:linear-gradient(160deg,#cfcfcf,#f6f6f6 70%);border:1px solid #b8b8b8;border-radius:1px"></div>
<div style="left:894.8px;top:195.2px;width:7.2px;height:7.4px;background:linear-gradient(160deg,#cfcfcf,#f6f6f6 70%);border:1px solid #b8b8b8;border-radius:1px"></div>
<div style="left:919.5px;top:195.2px;width:7.2px;height:7.4px;background:linear-gradient(160deg,#cfcfcf,#f6f6f6 70%);border:1px solid #b8b8b8;border-radius:1px"></div>
<div style="left:894.8px;top:205.8px;width:7.2px;height:7.4px;background:linear-gradient(160deg,#cfcfcf,#f6f6f6 70%);border:1px solid #b8b8b8;border-radius:1px"></div>
<div style="left:907px;top:205.8px;width:7.2px;height:7.4px;background:linear-gradient(160deg,#cfcfcf,#f6f6f6 70%);border:1px solid #b8b8b8;border-radius:1px"></div>
<div style="left:919.5px;top:205.8px;width:7.2px;height:7.4px;background:linear-gradient(160deg,#cfcfcf,#f6f6f6 70%);border:1px solid #b8b8b8;border-radius:1px"></div>
<div style="left:907.6px;top:196.2px;width:5.6px;height:5.6px;background:radial-gradient(circle at 45% 45%,#3aa0e0 0,#105a98 45%,#c8c8c8 60%,#e8e8e8 100%);border-radius:50%"></div>
<svg style="left:942px;top:189.5px;" width="20" height="19" viewBox="0 0 20 19"><rect x="0.8" y="3" width="15" height="15" fill="#a49cd4" stroke="#7a72b8" stroke-width="0.6"/><rect x="0.8" y="3" width="15" height="3.5" fill="#d4d0ee"/><path d="M0.8 6.5h15M0.8 9.5h15M0.8 12.5h15M0.8 15.5h15M4.5 3v15M8 3v15M11.5 3v15" stroke="#e8e6f8" stroke-width="0.6"/><path d="M13 2 A2.8 2.8 0 1 1 14.5 6.5" fill="none" stroke="#5a5a70" stroke-width="0.8"/><path d="M12 0.8l1.6 1.6-2 0.6z" fill="#5a5a70"/></svg>
<div style="left:890px;top:219px;width:74px;height:1px;background:#d4d4d4"></div>
<div style="left:890.5px;top:224px;width:74px;height:11px;background:linear-gradient(#f6f6f6,#dedede);border:1px solid #9a9a9a;border-radius:2px"></div>
<span class="t" style="left:890.5px;top:226.3px;width:74px;text-align:center;font-size:6.8px;color:#111;font-weight:bold">应用到再制</span>
<div style="left:890.5px;top:237px;width:74px;height:11px;background:linear-gradient(#f6f6f6,#dedede);border:1px solid #9a9a9a;border-radius:2px"></div>
<span class="t" style="left:890.5px;top:239.3px;width:74px;text-align:center;font-size:6.8px;color:#111;font-weight:bold">应用</span>
<div style="left:976px;top:62px;width:14px;height:412px;background:#f0f0f0"></div>
<div style="left:976.5px;top:72px;width:11px;height:44px;background:#f2f2f2;border:1px solid #d4d4d4;border-left:none;border-radius:0 2px 2px 0"></div>
<svg style="left:977px;top:74.5px;" width="10" height="10" viewBox="0 0 10 10"><path d="M0.5 1.5h2.5M1.75 0.5v7" stroke="#3a4070" stroke-width="0.8"/><rect x="3.5" y="0.8" width="3" height="2.4" fill="#5a6090"/><rect x="6" y="4" width="3" height="2.4" fill="#5a6090"/><path d="M4 4.5v4M8 1v2" stroke="#8a90b0" stroke-width="0.6" stroke-dasharray="0.8 0.6"/></svg>
<span class="t" style="left:979px;top:86.5px;font-size:5.6px;color:#8a8ea8;transform:rotate(90deg);transform-origin:2.8px 2.8px">对</span>
<span class="t" style="left:979px;top:92.1px;font-size:5.6px;color:#8a8ea8;transform:rotate(90deg);transform-origin:2.8px 2.8px">齐</span>
<span class="t" style="left:979px;top:97.7px;font-size:5.6px;color:#8a8ea8;transform:rotate(90deg);transform-origin:2.8px 2.8px">与</span>
<span class="t" style="left:979px;top:103.3px;font-size:5.6px;color:#8a8ea8;transform:rotate(90deg);transform-origin:2.8px 2.8px">分</span>
<span class="t" style="left:979px;top:108.9px;font-size:5.6px;color:#8a8ea8;transform:rotate(90deg);transform-origin:2.8px 2.8px">布</span>
<div style="left:976.5px;top:117px;width:11px;height:25px;background:#f2f2f2;border:1px solid #d4d4d4;border-left:none;border-radius:0 2px 2px 0"></div>
<svg style="left:977px;top:118.5px;" width="10" height="9" viewBox="0 0 10 9"><path d="M1.5 1v6l1.5-1.5 1.5 2.5 1-0.5-1.5-2.5h2z" fill="#fff" stroke="#5a6088" stroke-width="0.6"/><path d="M6.5 2.5a1.3 1.3 0 1 1 1.5 1.5v1" fill="none" stroke="#5a6088" stroke-width="0.8"/></svg>
<span class="t" style="left:979px;top:128.5px;font-size:5.6px;color:#8a90a8;transform:rotate(90deg);transform-origin:2.8px 2.8px">提</span>
<span class="t" style="left:979px;top:134.7px;font-size:5.6px;color:#8a90a8;transform:rotate(90deg);transform-origin:2.8px 2.8px">示</span>
<div style="left:975.5px;top:143px;width:12.5px;height:37px;background:#fafafa;border:1px solid #d4d4d4;border-left:none;border-radius:0 2px 2px 0"></div>
<svg style="left:977px;top:144px;" width="10" height="9" viewBox="0 0 10 9"><path d="M3 3 A3 3 0 1 0 6 8" fill="none" stroke="#3a4070" stroke-width="1"/><path d="M6 2h3M7.5 0.5v3" stroke="#3a4070" stroke-width="0.8"/></svg>
<span class="t" style="left:979px;top:154.5px;font-size:5.8px;color:#445;transform:rotate(90deg);transform-origin:2.9px 2.9px">变</span>
<span class="t" style="left:979px;top:160.7px;font-size:5.8px;color:#445;transform:rotate(90deg);transform-origin:2.9px 2.9px">换</span>
<svg style="left:978px;top:170.5px;" width="8" height="6" viewBox="0 0 8 6"><path d="M2 1L6 5M6 1L2 5" stroke="#555" stroke-width="0.9"/></svg>
<div style="left:880px;top:62px;width:108px;height:9.5px;background:linear-gradient(#eaf6fd,#c2e4f8 50%,#aad8f4)"></div>
<span class="t" style="left:884.3px;top:63.4px;font-size:6.9px;color:#1a1a1a;font-weight:bold">变换</span>
<svg style="left:959.5px;top:63.5px;" width="8" height="6" viewBox="0 0 8 6"><path d="M0.8 0.8L3 3L0.8 5.2M3.6 0.8L5.8 3L3.6 5.2" fill="none" stroke="#3a3a44" stroke-width="1.1"/></svg>
<div style="left:968.7px;top:62px;width:9.2px;height:9px;background:linear-gradient(#d0e0f0,#b4cce4);border:1px solid #8aa0c0;border-radius:1.5px"></div>
<div style="left:970.8px;top:66.3px;width:5px;height:1.7px;background:#fff;box-shadow:0 0 0 0.6px #556"></div>
<div style="left:979px;top:62px;width:9.2px;height:9px;background:linear-gradient(#eaa898,#d87868 50%,#d06a58);border:1px solid #945048;border-radius:1.5px"></div>
<svg style="left:980px;top:63px;" width="7" height="7" viewBox="0 0 7 7"><path d="M1.5 1.5L5.5 5.5M5.5 1.5L1.5 5.5" stroke="#5a3030" stroke-width="1.8"/><path d="M1.5 1.5L5.5 5.5M5.5 1.5L1.5 5.5" stroke="#fff" stroke-width="1"/></svg>
<div style="left:975.5px;top:180px;width:1px;height:294px;background:#d8d8d8"></div>
<div style="left:990px;top:62px;width:10px;height:412px;background:#ebebeb;border-left:1px solid #c8c8c8"></div>
<div style="left:992px;top:63.5px;width:1px;height:1px;background:#aaa"></div>
<div style="left:994px;top:63.5px;width:1px;height:1px;background:#aaa"></div>
<div style="left:996px;top:63.5px;width:1px;height:1px;background:#aaa"></div>
<div style="left:998px;top:63.5px;width:1px;height:1px;background:#aaa"></div>
<div style="left:991px;top:66.5px;width:8.5px;height:8.5px;background:radial-gradient(#fff,#e0e0e0);border:1px solid #c0c0c0;border-radius:50%"></div>
<svg style="left:992px;top:68px;" width="7" height="6" viewBox="0 0 7 6"><path d="M2 1L5.5 3L2 5z" fill="#111"/></svg>
<svg style="left:991px;top:77px;" width="8" height="5" viewBox="0 0 8 5"><path d="M2 4L4 2L6 4z" fill="#444"/></svg>
<div style="left:991px;top:84.5px;width:8.5px;height:8.5px;background:#fff;border:1px solid #555"></div>
<svg style="left:992px;top:85.5px;" width="6.5" height="6.5" viewBox="0 0 6.5 6.5"><path d="M0.5 0.5L6 6M6 0.5L0.5 6" stroke="#333" stroke-width="0.8"/><rect x="0.5" y="0.5" width="5.5" height="5.5" fill="none" stroke="#888" stroke-width="0.6"/></svg>
<div style="left:990.5px;top:93.2px;width:8.6px;height:8.86px;background:#221f1b;border-top:1px solid rgba(60,60,60,0.45)"></div>
<div style="left:990.5px;top:102.06px;width:8.6px;height:8.86px;background:#37332f;border-top:1px solid rgba(60,60,60,0.45)"></div>
<div style="left:990.5px;top:110.91px;width:8.6px;height:8.86px;background:#4a4642;border-top:1px solid rgba(60,60,60,0.45)"></div>
<div style="left:990.5px;top:119.77px;width:8.6px;height:8.86px;background:#5c5955;border-top:1px solid rgba(60,60,60,0.45)"></div>
<div style="left:990.5px;top:128.62px;width:8.6px;height:8.86px;background:#6f6c69;border-top:1px solid rgba(60,60,60,0.45)"></div>
<div style="left:990.5px;top:137.47px;width:8.6px;height:8.86px;background:#83807e;border-top:1px solid rgba(60,60,60,0.45)"></div>
<div style="left:990.5px;top:146.33px;width:8.6px;height:8.86px;background:#969493;border-top:1px solid rgba(60,60,60,0.45)"></div>
<div style="left:990.5px;top:155.18px;width:8.6px;height:8.86px;background:#aaa9a8;border-top:1px solid rgba(60,60,60,0.45)"></div>
<div style="left:990.5px;top:164.04px;width:8.6px;height:8.86px;background:#bebdbd;border-top:1px solid rgba(60,60,60,0.45)"></div>
<div style="left:990.5px;top:172.89px;width:8.6px;height:8.86px;background:#d9d9d9;border-top:1px solid rgba(60,60,60,0.45)"></div>
<div style="left:990.5px;top:181.75px;width:8.6px;height:8.86px;background:#ffffff;border-top:1px solid rgba(60,60,60,0.45)"></div>
<div style="left:990.5px;top:190.6px;width:8.6px;height:8.86px;background:#2a1070;border-top:1px solid rgba(60,60,60,0.45)"></div>
<div style="left:990.5px;top:199.46px;width:8.6px;height:8.86px;background:#1888e0;border-top:1px solid rgba(60,60,60,0.45)"></div>
<div style="left:990.5px;top:208.31px;width:8.6px;height:8.86px;background:#10904a;border-top:1px solid rgba(60,60,60,0.45)"></div>
<div style="left:990.5px;top:217.17px;width:8.6px;height:8.86px;background:#ffff00;border-top:1px solid rgba(60,60,60,0.45)"></div>
<div style="left:990.5px;top:226.02px;width:8.6px;height:8.86px;background:#f03c10;border-top:1px solid rgba(60,60,60,0.45)"></div>
<div style="left:990.5px;top:234.88px;width:8.6px;height:8.86px;background:#e8327a;border-top:1px solid rgba(60,60,60,0.45)"></div>
<div style="left:990.5px;top:243.73px;width:8.6px;height:8.86px;background:#9a4472;border-top:1px solid rgba(60,60,60,0.45)"></div>
<div style="left:990.5px;top:252.59px;width:8.6px;height:8.86px;background:#f58012;border-top:1px solid rgba(60,60,60,0.45)"></div>
<div style="left:990.5px;top:261.44px;width:8.6px;height:8.86px;background:#f9a6a0;border-top:1px solid rgba(60,60,60,0.45)"></div>
<div style="left:990.5px;top:270.3px;width:8.6px;height:8.86px;background:#7a6a62;border-top:1px solid rgba(60,60,60,0.45)"></div>
<div style="left:990.5px;top:279.15px;width:8.6px;height:8.86px;background:#b8acd8;border-top:1px solid rgba(60,60,60,0.45)"></div>
<div style="left:990.5px;top:288.01px;width:8.6px;height:8.86px;background:#8a78b8;border-top:1px solid rgba(60,60,60,0.45)"></div>
<div style="left:990.5px;top:296.86px;width:8.6px;height:8.86px;background:#5a78c0;border-top:1px solid rgba(60,60,60,0.45)"></div>
<div style="left:990.5px;top:305.72px;width:8.6px;height:8.86px;background:#6a52a0;border-top:1px solid rgba(60,60,60,0.45)"></div>
<div style="left:990.5px;top:314.57px;width:8.6px;height:8.86px;background:#7a6a98;border-top:1px solid rgba(60,60,60,0.45)"></div>
<div style="left:990.5px;top:323.43px;width:8.6px;height:8.86px;background:#4a5a80;border-top:1px solid rgba(60,60,60,0.45)"></div>
<div style="left:990.5px;top:332.29px;width:8.6px;height:8.86px;background:#4a4660;border-top:1px solid rgba(60,60,60,0.45)"></div>
<div style="left:990.5px;top:341.14px;width:8.6px;height:8.86px;background:#5a6a88;border-top:1px solid rgba(60,60,60,0.45)"></div>
<div style="left:990.5px;top:350.0px;width:8.6px;height:8.86px;background:#0a78d0;border-top:1px solid rgba(60,60,60,0.45)"></div>
<div style="left:990.5px;top:358.85px;width:8.6px;height:8.86px;background:#60c0f0;border-top:1px solid rgba(60,60,60,0.45)"></div>
<div style="left:990.5px;top:367.71px;width:8.6px;height:8.86px;background:#8ab0c8;border-top:1px solid rgba(60,60,60,0.45)"></div>
<div style="left:990.5px;top:376.56px;width:8.6px;height:8.86px;background:#6a8090;border-top:1px solid rgba(60,60,60,0.45)"></div>
<div style="left:990.5px;top:385.42px;width:8.6px;height:8.86px;background:#586670;border-top:1px solid rgba(60,60,60,0.45)"></div>
<div style="left:990.5px;top:394.27px;width:8.6px;height:8.86px;background:#404448;border-top:1px solid rgba(60,60,60,0.45)"></div>
<div style="left:990.5px;top:403.13px;width:8.6px;height:8.86px;background:#405c60;border-top:1px solid rgba(60,60,60,0.45)"></div>
<div style="left:990.5px;top:411.98px;width:8.6px;height:8.86px;background:#2a7870;border-top:1px solid rgba(60,60,60,0.45)"></div>
<div style="left:990.5px;top:420.84px;width:8.6px;height:8.86px;background:#5a8484;border-top:1px solid rgba(60,60,60,0.45)"></div>
<div style="left:990.5px;top:429.69px;width:8.6px;height:8.86px;background:#1a9088;border-top:1px solid rgba(60,60,60,0.45)"></div>
<div style="left:990.5px;top:438.55px;width:8.6px;height:8.86px;background:#1a8a70;border-top:1px solid rgba(60,60,60,0.45)"></div>
<div style="left:990.5px;top:447.4px;width:8.6px;height:8.86px;background:#10b4d0;border-top:1px solid rgba(60,60,60,0.45)"></div>
<div style="left:990.5px;top:456.26px;width:8.6px;height:8.86px;background:#2890a8;border-top:1px solid rgba(60,60,60,0.45)"></div>
<div style="left:990.5px;top:465.11px;width:8.6px;height:8.86px;background:#90b0a8;border-top:1px solid rgba(60,60,60,0.45)"></div>
<div style="left:990.5px;top:473.97px;width:8.6px;height:8.86px;background:#c8d0c0;border-top:1px solid rgba(60,60,60,0.45)"></div>
<div style="left:999px;top:62px;width:1px;height:412px;background:#a8a8a8"></div>
<svg style="left:840px;top:420px" width="100" height="54" viewBox="0 0 100 54"><path d="M0 8 L42 8 Q52 8.5 57 14 Q61 20 64 20.6 L86.5 25 L86.5 54 L0 54z" fill="#fff"/></svg>
<div style="left:926.5px;top:445px;width:10px;height:29px;background:#f0f0f0;border-left:1px solid #d4d4d4;border-right:1px solid #d8d8d8"></div>
<div style="left:929.5px;top:447px;width:6px;height:27px;background:linear-gradient(90deg,#f4f4f4,#d8d8d8 70%,#c0c0c0)"></div>
</body></html>
